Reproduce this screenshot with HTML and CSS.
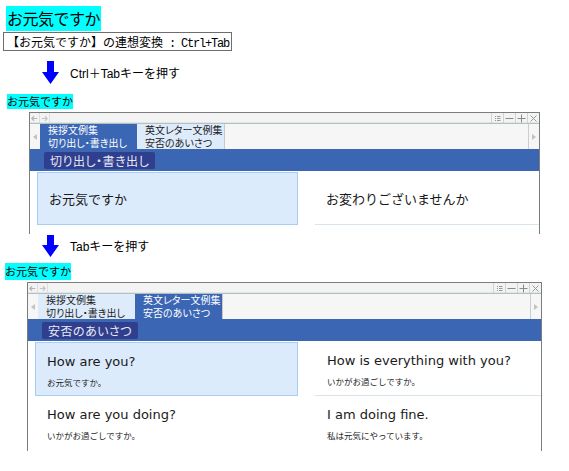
FILE: index.html
```html
<!DOCTYPE html>
<html lang="ja">
<head>
<meta charset="utf-8">
<title>連想変換</title>
<link rel="stylesheet" href="styles.css">
</head>
<body>
<div class="title">お元気ですか</div>
<div class="shortcut">【お元気ですか】の連想変換<span class="mono"> : Ctrl+Tab</span></div>

<div class="step step-1">
  <svg class="arrow" width="17" height="23" viewBox="0 0 17 23"><path d="M5 0H12V11H17L8.5 23L0 11H5Z" fill="#0000ff"/></svg>
  <span class="step-text">Ctrl＋Tabキーを押す</span>
</div>
<div class="label label-1">お元気ですか</div>

<div class="window window-1">
  <div class="titlebar">
    <span class="nav"><svg width="10" height="9" viewBox="0 0 10 9"><path d="M8 4.5H2M4.5 2L2 4.5L4.5 7" fill="none" stroke="#b4b4b4" stroke-width="1.2"/></svg></span>
    <span class="nav"><svg width="10" height="9" viewBox="0 0 10 9"><path d="M2 4.5H8M5.5 2L8 4.5L5.5 7" fill="none" stroke="#c4c4c4" stroke-width="1.2"/></svg></span>
    <span class="tb-fill"></span>
    <span class="ctl"><svg width="11" height="9" viewBox="0 0 11 9"><path d="M3 2.5H4M3 4.5H4M3 6.5H4M5 2.5H8.5M5 4.5H8.5M5 6.5H8.5" stroke="#9a9a9a"/></svg></span>
    <span class="ctl"><svg width="11" height="9" viewBox="0 0 11 9"><path d="M1.5 4.5H9.5" stroke="#8a8a8a"/></svg></span>
    <span class="ctl"><svg width="11" height="9" viewBox="0 0 11 9"><path d="M1.5 4.5H9.5M5.5 0.5V8.5" stroke="#8a8a8a"/></svg></span>
    <span class="ctl"><svg width="11" height="9" viewBox="0 0 11 9"><path d="M2.5 1.5L8.5 7.5M8.5 1.5L2.5 7.5" stroke="#9a9a9a"/></svg></span>
  </div>
  <div class="tabs">
    <span class="scroll"><svg width="4" height="6" viewBox="0 0 4 6"><path d="M4 0V6L0 3Z" fill="#c2c2c2"/></svg></span>
    <div class="tab tab-active"><div class="tab-line">挨拶文例集</div><div class="tab-line">切り出し・書き出し</div></div>
    <div class="tab tab-idle tab-last"><div class="tab-line">英文レター文例集</div><div class="tab-line">安否のあいさつ</div></div>
    <span class="tabs-fill"></span>
    <span class="scroll scroll-right"><svg width="4" height="6" viewBox="0 0 4 6"><path d="M0 0V6L4 3Z" fill="#c2c2c2"/></svg></span>
  </div>
  <div class="band"><span class="pill">切り出し・書き出し</span></div>
  <div class="content">
    <div class="cell card single"><span class="jp-big">お元気ですか</span></div>
    <div class="cell rule single"><span class="jp-big">お変わりございませんか</span></div>
  </div>
</div>

<div class="step step-2">
  <svg class="arrow" width="17" height="22" viewBox="0 0 17 22"><path d="M5 0H12V10H17L8.5 22L0 10H5Z" fill="#0000ff"/></svg>
  <span class="step-text">Tabキーを押す</span>
</div>
<div class="label label-2">お元気ですか</div>

<div class="window window-2">
  <div class="titlebar">
    <span class="nav"><svg width="10" height="9" viewBox="0 0 10 9"><path d="M8 4.5H2M4.5 2L2 4.5L4.5 7" fill="none" stroke="#b4b4b4" stroke-width="1.2"/></svg></span>
    <span class="nav"><svg width="10" height="9" viewBox="0 0 10 9"><path d="M2 4.5H8M5.5 2L8 4.5L5.5 7" fill="none" stroke="#c4c4c4" stroke-width="1.2"/></svg></span>
    <span class="tb-fill"></span>
    <span class="ctl"><svg width="11" height="9" viewBox="0 0 11 9"><path d="M3 2.5H4M3 4.5H4M3 6.5H4M5 2.5H8.5M5 4.5H8.5M5 6.5H8.5" stroke="#9a9a9a"/></svg></span>
    <span class="ctl"><svg width="11" height="9" viewBox="0 0 11 9"><path d="M1.5 4.5H9.5" stroke="#8a8a8a"/></svg></span>
    <span class="ctl"><svg width="11" height="9" viewBox="0 0 11 9"><path d="M1.5 4.5H9.5M5.5 0.5V8.5" stroke="#8a8a8a"/></svg></span>
    <span class="ctl"><svg width="11" height="9" viewBox="0 0 11 9"><path d="M2.5 1.5L8.5 7.5M8.5 1.5L2.5 7.5" stroke="#9a9a9a"/></svg></span>
  </div>
  <div class="tabs">
    <span class="scroll"><svg width="4" height="6" viewBox="0 0 4 6"><path d="M4 0V6L0 3Z" fill="#c2c2c2"/></svg></span>
    <div class="tab tab-idle"><div class="tab-line">挨拶文例集</div><div class="tab-line">切り出し・書き出し</div></div>
    <div class="tab tab-active tab-last"><div class="tab-line">英文レター文例集</div><div class="tab-line">安否のあいさつ</div></div>
    <span class="tabs-fill"></span>
    <span class="scroll scroll-right"><svg width="4" height="6" viewBox="0 0 4 6"><path d="M0 0V6L4 3Z" fill="#c2c2c2"/></svg></span>
  </div>
  <div class="band"><span class="pill">安否のあいさつ</span></div>
  <div class="content">
    <div class="cell card phrase"><div class="en">How are you?</div><div class="ja">お元気ですか。</div></div>
    <div class="cell rule phrase"><div class="en">How is everything with you?</div><div class="ja">いかがお過ごしですか。</div></div>
    <div class="cell phrase phrase-2"><div class="en">How are you doing?</div><div class="ja">いかがお過ごしですか。</div></div>
    <div class="cell phrase phrase-2"><div class="en">I am doing fine.</div><div class="ja">私は元気にやっています。</div></div>
  </div>
</div>
</body>
</html>
```

FILE: styles.css
```css
* { box-sizing: border-box; }

body {
  margin: 0;
  padding-top: 6px;
  font-family: "Noto Sans CJK JP", sans-serif;
  color: #000;
  background: #fff;
}

.title {
  width: fit-content;
  margin-left: 6px;
  height: 25px;
  line-height: 25px;
  padding: 0 1px;
  font-size: 16px;
  letter-spacing: -0.5px;
  background: #00ffff;
}

.shortcut {
  width: fit-content;
  margin: 1px 0 0 3px;
  height: 19px;
  line-height: 17px;
  padding: 0 2px 0 3px;
  border: 1px solid #6e6e6e;
  font-size: 12px;
}

.mono {
  font-family: "Liberation Mono", "Noto Sans CJK JP", monospace;
  font-size: 12px;
  letter-spacing: -1.2px;
}

.step {
  display: flex;
  align-items: center;
  height: 23px;
}
.step-1 { margin-top: 10px; }
.step-2 { margin-top: 0; }

.arrow { display: block; margin-left: 42px; }

.step-text {
  margin-left: 11px;
  font-family: "Liberation Sans", "Noto Sans CJK JP", sans-serif;
  font-size: 12px;
}

.label {
  width: fit-content;
  background: #00ffff;
  font-size: 11px;
}
.label-1 { margin: 10px 0 0 7px; height: 15px; line-height: 15px; }
.label-2 { margin: 6px 0 0 5px; height: 17px; line-height: 17px; }

/* window */
.window {
  border: 1px solid #7c7c7c;
  border-bottom: none;
}
.window-1 { margin: 3px 0 0 29px; width: 511px; --col1: 261px; }
.window-2 { margin: 2px 0 0 27px; width: 515px; --col1: 263px; }

.titlebar {
  display: flex;
  height: 11px;
  background: #f3f3f3;
  border-bottom: 1px solid #bdbdbd;
  box-shadow: inset 0 -1px 0 #d4ecef;
}
.nav {
  width: 10px;
  display: flex;
  align-items: center;
  justify-content: center;
  border-right: 1px solid #dedede;
}
.tb-fill { flex: 1; }
.ctl {
  width: 12px;
  display: flex;
  align-items: center;
  justify-content: center;
  border-left: 1px solid #d2d2d2;
}

.tabs {
  display: flex;
  height: 25px;
  background: #f6f6f6;
}
.scroll {
  width: 10px;
  display: flex;
  align-items: center;
  justify-content: center;
}
.scroll-right { width: 11px; border-left: 1px solid #cdcdcd; }
.tabs-fill { flex: 1; }

.tab {
  width: 97px;
  padding: 0 0 0 8px;
  font-size: 10px;
  font-feature-settings: "palt";
  white-space: nowrap;
}
.tab-line { height: 12.5px; line-height: 12.5px; }
.tab-last { width: 88px; border-right: 1px solid #c9c9c9; }
.tab-active { background: #3b66b4; color: #fff; }
.tab-idle { background: #deebfb; color: #1c1c1c; }

.band {
  display: flex;
  align-items: flex-start;
  height: 22px;
  padding: 3px 0 0 14px;
  background: #3b66b4;
}
.pill {
  display: block;
  height: 17px;
  line-height: 17px;
  padding: 0 6px;
  border-radius: 2px;
  background: #2f3f8e;
  color: #e8eaf6;
  font-size: 12px;
  letter-spacing: 0.5px;
  font-feature-settings: "palt";
}

.content {
  display: grid;
  grid-template-columns: var(--col1) 1fr;
  column-gap: 17px;
  padding: 1px 0 0 7px;
}
.window-1 .content { padding-bottom: 9px; }

.cell { padding-left: 11px; }
.card {
  background: #dcebfc;
  border: 1px solid #a8cdf2;
}
.rule { border-bottom: 1px solid #d7e4ec; }

.single {
  height: 53px;
  display: flex;
  align-items: center;
}
.jp-big { font-size: 13px; color: #1a1a1a; }

.phrase { height: 54px; padding-top: 9px; }
.phrase.rule, .phrase-2 { padding-left: 12px; }
.phrase-2 { height: 55px; padding-top: 9px; }

.en {
  font-family: "DejaVu Sans", sans-serif;
  font-size: 13px;
  line-height: 20px;
  color: #1a1a1a;
}
.ja {
  margin-top: 3px;
  font-size: 8.5px;
  line-height: 14px;
  color: #1a1a1a;
}
```
